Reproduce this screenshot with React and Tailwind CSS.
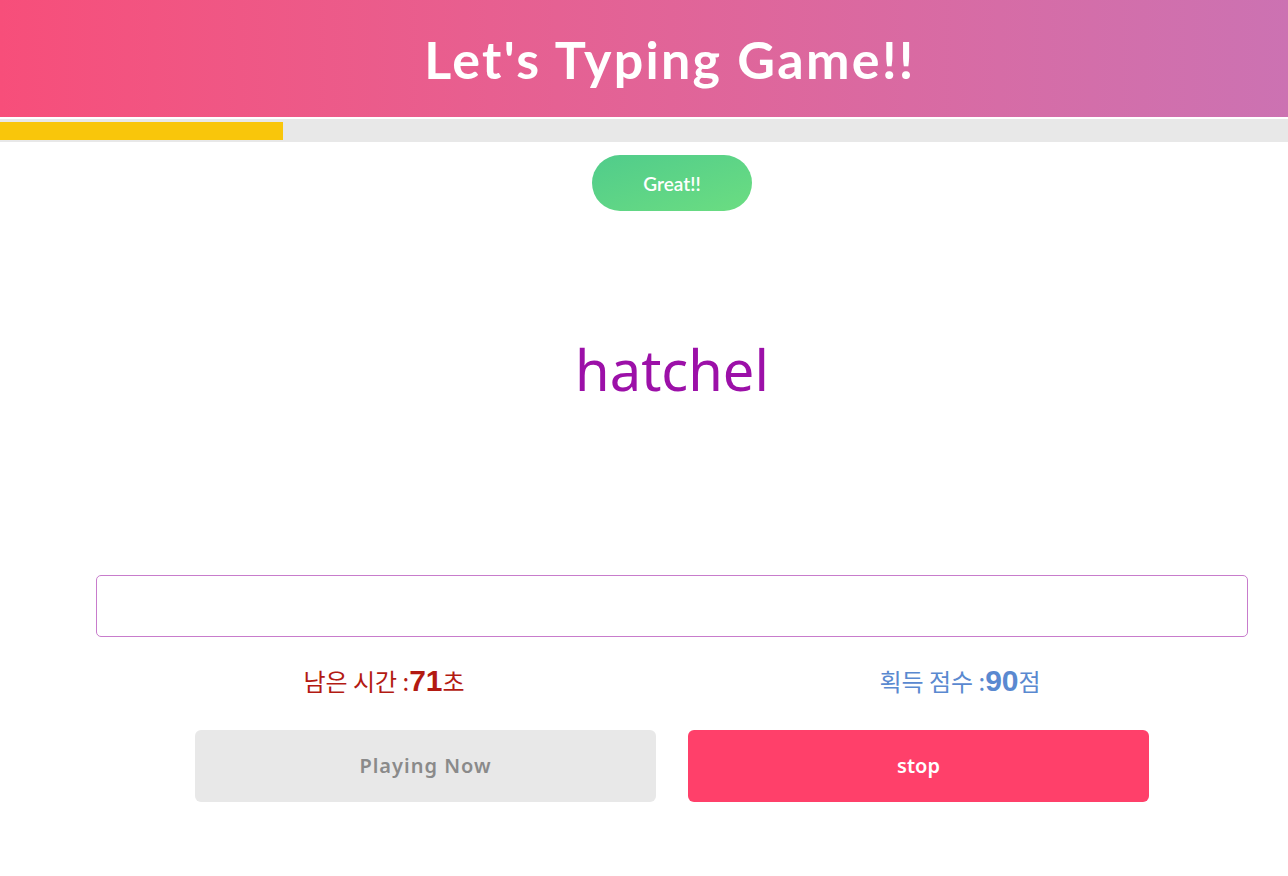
export default function App() {
  return (
    <div className="min-h-[876px] w-[1288px] bg-white" style={{ fontFamily: 'Lato, "Noto Sans", sans-serif' }}>
      <header className="flex h-[117px] items-center justify-center bg-gradient-to-r from-[#f74e7a] to-[#cc72b2] pl-[52px]">
        <h1 className="text-[52px] font-bold tracking-[2.3px] text-white" style={{ fontFamily: 'Lato, sans-serif' }}>
          Let's Typing Game!!
        </h1>
      </header>
      <div className="mt-[2px] h-[23px] bg-[#e8e8e8] pt-[3px]">
        <div className="h-[18px] w-[283px] bg-[#f9c60b]" />
      </div>

      <div className="flex flex-col items-center pl-[56px]">
        <button className="mt-[13px] h-[56px] w-[160px] rounded-full bg-gradient-to-br from-[#50cc8b] to-[#6bdd81] pt-[3px] text-[19px] font-semibold text-white">
          Great!!
        </button>
        <div className="flex h-[364px] items-center justify-center pb-[48px] text-[56px] text-[#9c10a8]" style={{ fontFamily: '"Noto Sans", sans-serif' }}>
          hatchel
        </div>
      </div>

      <div className="pl-[96px] pr-[40px]">
        <input
          type="text"
          className="block h-[62px] w-full rounded-[5px] border border-[#c87ccc] outline-none"
        />
        <div
          className="mt-[21px] grid grid-cols-2 text-[24px]"
          style={{ fontFamily: '"Noto Sans CJK KR", "Noto Sans", sans-serif' }}
        >
          <div className="text-center text-[#b31a12]">
            남은 시간 :<span className="text-[30px] font-bold" style={{ fontFamily: '"Liberation Sans", sans-serif' }}>71</span>초
          </div>
          <div className="text-center text-[#5a89d0]">
            획득 점수 :<span className="text-[30px] font-bold" style={{ fontFamily: '"Liberation Sans", sans-serif' }}>90</span>점
          </div>
        </div>
      </div>

      <div className="mt-[27px] flex justify-center gap-[32px] pl-[56px]" style={{ fontFamily: '"Noto Sans", sans-serif' }}>
        <button className="h-[72px] w-[461px] rounded-[6px] bg-[#e8e8e8] text-[20px] font-semibold tracking-[1px] text-[#8a8a8a]">
          Playing Now
        </button>
        <button className="h-[72px] w-[461px] rounded-[6px] bg-[#ff406a] text-[20px] font-semibold text-white">
          stop
        </button>
      </div>
    </div>
  );
}
